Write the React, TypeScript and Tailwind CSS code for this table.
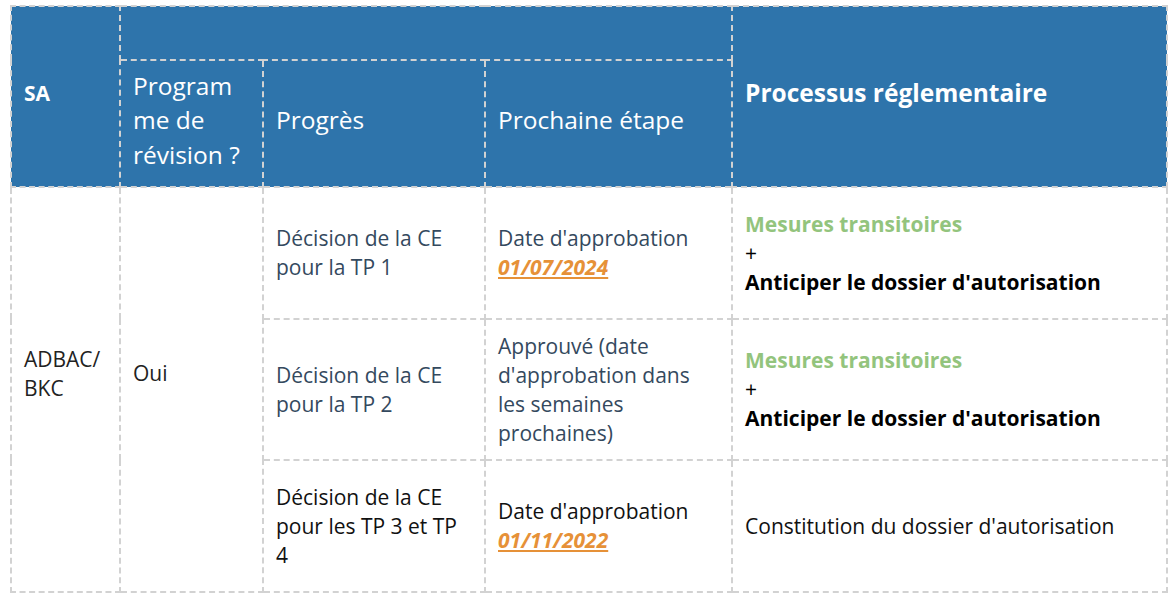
const cell = "border-2 border-dashed border-[#d2d2d2] px-[12px] align-middle";
const head =
  "border-2 border-dashed border-[#d2d2d2] px-[12px] pb-[6px] align-middle bg-[#2e74ab] text-white";

function DateLink({ value }: { value: string }) {
  return (
    <span className="font-bold italic underline text-[#e69138] underline-offset-2">{value}</span>
  );
}

function Rule() {
  return (
    <div>
      <div className="font-bold text-[#93c47d]">Mesures transitoires</div>
      <div className="text-black">+</div>
      <div className="font-bold text-black">Anticiper le dossier d'autorisation</div>
    </div>
  );
}

export default function App() {
  return (
    <div className="bg-white min-h-screen pl-[10px] pt-[5px] font-['Open_Sans',sans-serif]">
      <table className="border-collapse table-fixed w-[1156px]">
        <colgroup>
          <col className="w-[109px]" />
          <col className="w-[143px]" />
          <col className="w-[222px]" />
          <col className="w-[247px]" />
          <col className="w-[435px]" />
        </colgroup>
        <thead>
          <tr className="h-[54px]">
            <th rowSpan={2} className={`${head} text-left text-[21px] font-bold`}>
              SA
            </th>
            <th colSpan={3} className={head}></th>
            <th rowSpan={2} className={`${head} text-left text-[24.5px] font-bold`}>
              Processus réglementaire
            </th>
          </tr>
          <tr className="h-[127px] text-[24.5px] leading-[34.5px] text-left">
            <th className={`${head} font-normal text-left`}>Program me de révision ?</th>
            <th className={`${head} font-normal text-left`}>Progrès</th>
            <th className={`${head} font-normal text-left`}>Prochaine étape</th>
          </tr>
        </thead>
        <tbody className="text-[21px] leading-[29px]">
          <tr className="h-[132px]">
            <td rowSpan={3} className={`${cell} pb-[32px] text-[#222]`}>
              ADBAC/
              <br />
              BKC
            </td>
            <td rowSpan={3} className={`${cell} pb-[32px] text-[#222]`}>
              Oui
            </td>
            <td className={`${cell} text-[#34495e]`}>Décision de la CE pour la TP 1</td>
            <td className={`${cell} text-[#34495e]`}>
              Date d'approbation
              <br />
              <DateLink value="01/07/2024" />
            </td>
            <td className={cell}>
              <Rule />
            </td>
          </tr>
          <tr className="h-[141px]">
            <td className={`${cell} text-[#34495e]`}>Décision de la CE pour la TP 2</td>
            <td className={`${cell} text-[#34495e]`}>
              Approuvé (date d'approbation dans les semaines prochaines)
            </td>
            <td className={cell}>
              <Rule />
            </td>
          </tr>
          <tr className="h-[132px]">
            <td className={`${cell} text-[#111]`}>Décision de la CE pour les TP 3 et TP 4</td>
            <td className={`${cell} text-[#111]`}>
              Date d'approbation
              <br />
              <DateLink value="01/11/2022" />
            </td>
            <td className={`${cell} text-[#111]`}>Constitution du dossier d'autorisation</td>
          </tr>
        </tbody>
      </table>
    </div>
  );
}
